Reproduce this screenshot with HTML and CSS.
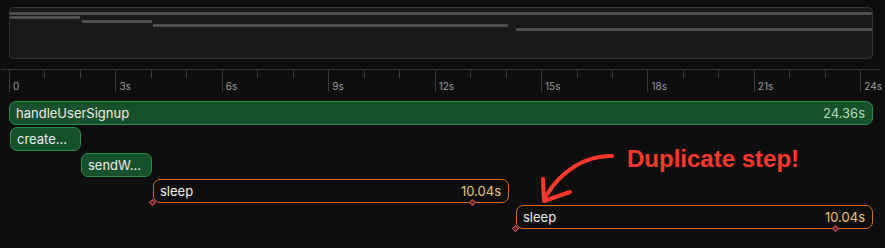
FILE: index.html
```html
<!DOCTYPE html>
<html lang="en">
<head>
    <meta charset="UTF-8">
    <meta name="viewport" content="width=device-width, initial-scale=1.0">
    <title>Run timeline</title>
    <link rel="stylesheet" href="styles.css">
</head>
<body>
    <!-- overview of all spans -->
    <div class="minimap">
        <div class="mm-line" style="margin-left: 0; width: 862px"></div>
        <div class="mm-line" style="margin-left: 0; width: 70px"></div>
        <div class="mm-line" style="margin-left: 72px; width: 70px"></div>
        <div class="mm-line" style="margin-left: 143px; width: 355px"></div>
        <div class="mm-line" style="margin-left: 506px; width: 356px"></div>
    </div>

    <div class="axis">
        <div class="ticks">
            <div class="tick major">0</div><div class="tick"></div><div class="tick"></div>
            <div class="tick major">3s</div><div class="tick"></div><div class="tick"></div>
            <div class="tick major">6s</div><div class="tick"></div><div class="tick"></div>
            <div class="tick major">9s</div><div class="tick"></div><div class="tick"></div>
            <div class="tick major">12s</div><div class="tick"></div><div class="tick"></div>
            <div class="tick major">15s</div><div class="tick"></div><div class="tick"></div>
            <div class="tick major">18s</div><div class="tick"></div><div class="tick"></div>
            <div class="tick major">21s</div><div class="tick"></div><div class="tick"></div>
            <div class="tick major">24s</div>
        </div>
    </div>

    <div class="lanes">
        <div class="lane">
            <div class="span step" style="margin-left: 9px; width: 864px">
                <span class="name">handleUserSignup</span>
                <span class="dur">24.36s</span>
            </div>
        </div>
        <div class="lane">
            <div class="span step" style="margin-left: 10px; width: 71px">
                <span class="name">create…</span>
            </div>
        </div>
        <div class="lane">
            <div class="span step" style="margin-left: 81px; width: 71px">
                <span class="name">sendW…</span>
            </div>
        </div>
        <div class="lane">
            <div class="span sleep" style="margin-left: 153px; width: 356px">
                <span class="name">sleep</span>
                <span class="dur">10.04s</span>
                <i class="marker" style="left: -4px"></i>
                <i class="marker" style="left: 316px"></i>
            </div>
        </div>
        <div class="lane">
            <div class="span sleep" style="margin-left: 516px; width: 357px">
                <span class="name">sleep</span>
                <span class="dur">10.04s</span>
                <i class="marker" style="left: -4px"></i>
                <i class="marker" style="left: 316px"></i>
            </div>
        </div>
    </div>

    <!-- annotation -->
    <div class="callout">Duplicate step!</div>
    <svg class="arrow" width="95" height="65" viewBox="0 0 95 65">
        <path d="M82 11 C56 10 31 26 16 51" />
        <path d="M13 34 L14 56 L40 47" />
    </svg>
</body>
</html>
```

FILE: styles.css
```css
body {
    margin: 0;
    width: 885px;
    height: 248px;
    overflow: hidden;
    position: relative;
    background-color: #0e0e0e;
    color: #ececec;
    font-family: Inter, "Noto Sans", sans-serif;
}

.minimap {
    box-sizing: border-box;
    height: 52px;
    margin: 7px 12px 0 9px;
    padding-top: 4px;
    background-color: #191919;
    border: 1px solid #333;
    border-radius: 4px;
    overflow: hidden;
}

.mm-line {
    height: 3px;
    margin-bottom: 1px;
    background-color: #4e4e4e;
    border-radius: 1px;
}

.axis {
    height: 32px;
    box-sizing: border-box;
    margin: 10px 5px 0 1px;
    border-top: 1px solid #333;
}

.ticks {
    display: flex;
    padding-left: 8px;
}

.tick {
    flex: none;
    box-sizing: border-box;
    width: 35.47px;
    height: 8px;
    border-left: 1px solid #3a3a3a;
}

.tick.major {
    height: 22px;
    padding: 10px 0 0 3px;
    font-size: 10px;
    line-height: 12px;
    color: #9c9c9c;
    white-space: nowrap;
}

.lane {
    height: 24px;
    margin-bottom: 2px;
}

.span {
    position: relative;
    display: flex;
    justify-content: space-between;
    align-items: center;
    box-sizing: border-box;
    height: 24px;
    padding: 0 7px 0 6px;
    border: 1px solid;
    border-radius: 7px;
    font-size: 13px;
    white-space: nowrap;
}

.span.step {
    background-color: #17502c;
    border-color: #2b8f4b;
}

.span.step .dur {
    color: #b4d8bb;
}

.span.sleep {
    background-color: #0f0f0f;
    border-color: #d96d0c;
}

.span.sleep .dur {
    color: #e6c47a;
}

.marker {
    position: absolute;
    bottom: -3px;
    width: 5px;
    height: 5px;
    box-sizing: border-box;
    border: 1px solid #d24d5c;
    background-color: #4f1a20;
    transform: rotate(45deg);
}

.callout {
    position: absolute;
    left: 627px;
    top: 147px;
    font-family: "Liberation Sans", Arial, sans-serif;
    font-weight: bold;
    font-size: 24px;
    line-height: 24px;
    color: #ff3a2d;
}

.arrow {
    position: absolute;
    left: 530px;
    top: 145px;
    fill: none;
    stroke: #ff3a2d;
    stroke-width: 4;
    stroke-linecap: round;
    stroke-linejoin: round;
}
```
